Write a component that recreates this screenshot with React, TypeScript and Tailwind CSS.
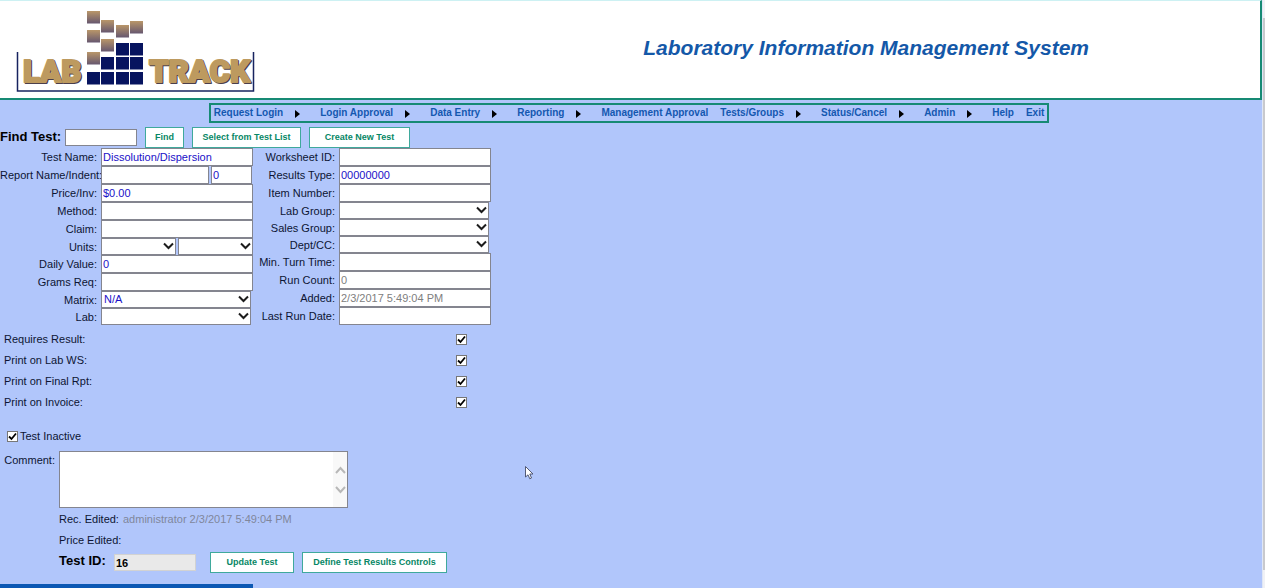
import React from 'react';

interface NavItem {
  label: string;
  hasMenu?: boolean;
}

const navItems: NavItem[] = [
  { label: 'Request Login', hasMenu: true },
  { label: 'Login Approval', hasMenu: true },
  { label: 'Data Entry', hasMenu: true },
  { label: 'Reporting', hasMenu: true },
  { label: 'Management Approval' },
  { label: 'Tests/Groups', hasMenu: true },
  { label: 'Status/Cancel', hasMenu: true },
  { label: 'Admin', hasMenu: true },
  { label: 'Help' },
  { label: 'Exit' },
];

// Falling tan squares: x, y
const tanSquares = [
  [87, 10], [87, 29], [87, 51], [101, 19], [101, 38], [116, 24], [130, 20],
];

const navySquares = [
  [116, 42], [130, 42],
  [101, 56], [116, 56], [130, 56],
  [87, 71], [101, 71], [116, 71], [130, 71],
];

const Logo: React.FC = () => (
  <svg width="270" height="96" viewBox="0 0 270 96" role="img" aria-label="Lab Track">
    <defs>
      <linearGradient id="tan" x1="0" y1="0" x2="0" y2="1">
        <stop offset="0" stopColor="#b99669" />
        <stop offset="1" stopColor="#66576f" />
      </linearGradient>
    </defs>
    <path d="M17.5 51V90H253.5V51" fill="none" stroke="#17235f" strokeWidth="1.5" />
    {tanSquares.map(([x, y]) => (
      <rect key={`${x}-${y}`} x={x} y={y} width="13" height="12.5" fill="url(#tan)" />
    ))}
    {navySquares.map(([x, y]) => (
      <rect key={`${x}-${y}`} x={x} y={y} width="13" height="12.5" fill="#07145f" />
    ))}
    <g className="font-[Roboto,sans-serif] text-[31px] font-black" strokeWidth="2" strokeLinejoin="round">
      <g fill="#4b3f4c" stroke="#4b3f4c">
        <text x="24" y="82">LAB</text>
        <text x="150" y="82">TRACK</text>
      </g>
      <g fill="#bd9a5f" stroke="#bd9a5f">
        <text x="23" y="81">LAB</text>
        <text x="149" y="81">TRACK</text>
      </g>
    </g>
  </svg>
);

const Nav: React.FC = () => (
  <nav className="mx-auto flex h-5 w-fit border-2 border-[#168a74] px-[3px] text-[10px] font-bold leading-[15px] text-[#1458b0]">
    {navItems.map((item) => (
      <div key={item.label} className="group flex">
        <a href="#" className="whitespace-nowrap pr-3 group-last:pr-0">{item.label}</a>
        {item.hasMenu && (
          <svg width="5" height="8" viewBox="0 0 5 8" className="mr-5 mt-[5px]" aria-hidden="true">
            <path d="M0 0L5 4L0 8Z" fill="#000" />
          </svg>
        )}
      </div>
    ))}
  </nav>
);

const Button: React.FC<{ children: React.ReactNode; className: string }> = ({ children, className }) => (
  <button
    type="button"
    className={`h-[21px] whitespace-nowrap border border-[#3fa99c] bg-white text-[9px] font-bold text-[#078765] ${className}`}
  >
    {children}
  </button>
);

interface FieldProps {
  id: string;
  label: string;
  labelWidth?: string;
  children: React.ReactNode;
}

const Field: React.FC<FieldProps> = ({ id, label, labelWidth = 'w-[101px]', children }) => (
  <div className="flex">
    <label htmlFor={id} className={`block shrink-0 whitespace-nowrap pr-1 text-right leading-[18px] ${labelWidth}`}>
      {label}
    </label>
    {children}
  </div>
);

interface TextBoxProps {
  id: string;
  value?: string;
  width?: string;
  color?: string;
  ariaLabel?: string;
}

const TextBox: React.FC<TextBoxProps> = ({ id, value = '', width = 'w-[152px]', color = 'text-[#1a10c8]', ariaLabel }) => (
  <input
    id={id}
    type="text"
    defaultValue={value}
    aria-label={ariaLabel}
    className={`h-[18px] border border-[#84858f] bg-white px-px ${width} ${color}`}
  />
);

const SelectBox: React.FC<TextBoxProps> = ({ id, value = '', width = 'w-[150px]', ariaLabel }) => (
  <div className={`relative h-[17px] ${width}`}>
    <select
      id={id}
      aria-label={ariaLabel}
      className="block h-[17px] w-full appearance-none border border-[#84858f] bg-white px-[2px] leading-[15px] text-[#1a10c8]"
    >
      <option>{value}</option>
    </select>
    <svg width="11" height="8" viewBox="0 0 11 8" className="pointer-events-none absolute right-[2px] top-1" aria-hidden="true">
      <path d="M1 1.500L5.500 6L10 1.500" fill="none" stroke="#1c1c1c" strokeWidth="2" />
    </svg>
  </div>
);

const CheckBox: React.FC<{ id: string }> = ({ id }) => (
  <span className="relative block size-[11px]">
    <input id={id} type="checkbox" defaultChecked className="peer block size-[11px] appearance-none border border-[#777] bg-white" />
    <svg width="11" height="11" viewBox="0 0 11 11" className="pointer-events-none absolute inset-0 hidden peer-checked:block" aria-hidden="true">
      <path d="M2 5.500L4.500 8L9 2.500" fill="none" stroke="#000" strokeWidth="1.8" />
    </svg>
  </span>
);

const printOptions = [
  { id: 'requires-result', label: 'Requires Result:' },
  { id: 'print-lab', label: 'Print on Lab WS:' },
  { id: 'print-final', label: 'Print on Final Rpt:' },
  { id: 'print-invoice', label: 'Print on Invoice:' },
];

const TestForm: React.FC = () => (
  <form className="flex grow flex-col">
    <div className="mt-1 flex">
      <label htmlFor="find-test" className="w-[65px] whitespace-nowrap text-[13px] font-bold leading-5 text-black">Find Test:</label>
      <input id="find-test" type="text" className="mt-[2px] h-[17px] w-[72px] border border-[#84858f] bg-white px-px" />
      <Button className="ml-2 w-[39px]">Find</Button>
      <Button className="ml-2 w-[109px]">Select from Test List</Button>
      <Button className="ml-2 w-[101px]">Create New Test</Button>
    </div>

    <div className="flex items-start">
      <div className="w-[253px] shrink-0">
        <Field id="test-name" label="Test Name:"><TextBox id="test-name" value="Dissolution/Dispersion" /></Field>
        <Field id="report-name" label="Report Name/Indent:">
          <div className="flex gap-[2px]">
            <TextBox id="report-name" width="w-[108px]" />
            <TextBox id="indent" value="0" width="w-[41px]" ariaLabel="Indent" />
          </div>
        </Field>
        <Field id="price" label="Price/Inv:"><TextBox id="price" value="$0.00" /></Field>
        <Field id="method" label="Method:"><TextBox id="method" /></Field>
        <Field id="claim" label="Claim:"><TextBox id="claim" /></Field>
        <div className="h-[17px]">
          <Field id="units" label="Units:">
            <div className="flex gap-[2px]">
              <SelectBox id="units" width="w-[75px]" />
              <SelectBox id="units-per" width="w-[75px]" ariaLabel="Units per" />
            </div>
          </Field>
        </div>
        <Field id="daily" label="Daily Value:"><TextBox id="daily" value="0" /></Field>
        <Field id="grams" label="Grams Req:"><TextBox id="grams" /></Field>
        <div className="h-[17px]">
          <Field id="matrix" label="Matrix:"><SelectBox id="matrix" value="N/A" /></Field>
        </div>
        <div className="h-[17px]">
          <Field id="lab" label="Lab:"><SelectBox id="lab" /></Field>
        </div>
      </div>

      <div>
        <Field id="worksheet" label="Worksheet ID:" labelWidth="w-[86px]"><TextBox id="worksheet" /></Field>
        <Field id="results" label="Results Type:" labelWidth="w-[86px]"><TextBox id="results" value="00000000" /></Field>
        <Field id="item" label="Item Number:" labelWidth="w-[86px]"><TextBox id="item" /></Field>
        <div className="h-[17px]">
          <Field id="lab-group" label="Lab Group:" labelWidth="w-[86px]"><SelectBox id="lab-group" /></Field>
        </div>
        <div className="h-[17px]">
          <Field id="sales-group" label="Sales Group:" labelWidth="w-[86px]"><SelectBox id="sales-group" /></Field>
        </div>
        <div className="h-[17px]">
          <Field id="dept" label="Dept/CC:" labelWidth="w-[86px]"><SelectBox id="dept" /></Field>
        </div>
        <Field id="turn" label="Min. Turn Time:" labelWidth="w-[86px]"><TextBox id="turn" /></Field>
        <Field id="run-count" label="Run Count:" labelWidth="w-[86px]"><TextBox id="run-count" value="0" color="text-[#808080]" /></Field>
        <Field id="added" label="Added:" labelWidth="w-[86px]"><TextBox id="added" value="2/3/2017 5:49:04 PM" color="text-[#808080]" /></Field>
        <Field id="last-run" label="Last Run Date:" labelWidth="w-[86px]"><TextBox id="last-run" /></Field>
      </div>
    </div>

    <div className="mt-1 w-[467px] pl-1">
      {printOptions.map((option) => (
        <div key={option.id} className="flex h-[21px] items-center justify-between">
          <label htmlFor={option.id}>{option.label}</label>
          <CheckBox id={option.id} />
        </div>
      ))}
    </div>

    <div className="mt-3 flex h-[22px] items-center gap-[2px] pl-[7px]">
      <CheckBox id="inactive" />
      <label htmlFor="inactive">Test Inactive</label>
    </div>

    <div className="mt-1 flex">
      <label htmlFor="comment" className="w-[59px] pr-1 text-right leading-[18px]">Comment:</label>
      <div className="relative">
        <textarea id="comment" className="block h-[57px] w-[289px] resize-none border border-[#84858f] bg-white" />
        <div className="absolute inset-y-px right-px flex w-[14px] flex-col items-center justify-center gap-3 bg-[#f8f8f8]">
          <svg width="11" height="8" viewBox="0 0 11 8" aria-hidden="true">
            <path d="M1 7L5.500 2L10 7" fill="none" stroke="#b8b8b8" strokeWidth="2" />
          </svg>
          <svg width="11" height="8" viewBox="0 0 11 8" aria-hidden="true">
            <path d="M1 1L5.500 6L10 1" fill="none" stroke="#b8b8b8" strokeWidth="2" />
          </svg>
        </div>
      </div>
    </div>

    <div className="pl-[59px]">
      <p className="mt-px leading-[21px]">Rec. Edited: <span className="ml-px text-[#80869c]">administrator 2/3/2017 5:49:04 PM</span></p>
      <p className="leading-[21px]">Price Edited:</p>
      <div className="mt-px flex">
        <label htmlFor="test-id" className="w-[55px] whitespace-nowrap text-[13px] font-bold leading-[18px] text-black">Test ID:</label>
        <input id="test-id" type="text" readOnly defaultValue="16" className="mt-[2px] h-[17px] w-[82px] border border-[#d2d2d2] bg-[#e9e9e9] px-px font-bold text-black" />
        <Button className="ml-[14px] w-[84px]">Update Test</Button>
        <Button className="ml-2 w-[145px]">Define Test Results Controls</Button>
      </div>
    </div>

    <div className="mt-auto h-1 w-[253px] bg-[#0b58b4]" />
  </form>
);

const App: React.FC = () => (
  <div className="relative flex min-h-screen bg-[#b1c6fb] font-['Liberation_Sans',Arial,sans-serif] text-[11px] text-[#0d1533]">
    <div className="flex min-w-0 grow flex-col">
      <header className="flex h-[100px] shrink-0 items-start justify-between border-b-2 border-r-2 border-t border-b-[#168a74] border-r-[#168a74] border-t-[#cdf1f3] bg-white">
        <Logo />
        <h1 className="mr-[171px] mt-8 whitespace-nowrap text-[21px] font-bold italic leading-[30px] text-[#1458a8]">
          Laboratory Information Management System
        </h1>
      </header>
      <div className="mt-[3px] pr-1">
        <Nav />
      </div>
      <TestForm />
    </div>

    {/* Page scrollbar */}
    <div className="flex w-[3px] shrink-0 flex-col border-l border-[#dfe6f5] bg-[#f0f1f5] py-[18px]">
      <div className="grow bg-[#c8c9cd]" />
    </div>

    <svg width="9" height="14" viewBox="0 0 9 14" className="pointer-events-none absolute left-[525px] top-[466px]" aria-hidden="true">
      <path d="M0.500 0.500V11L3 8.800L4.800 12.800L6.500 12L4.800 8H8Z" fill="#fff" stroke="#444b66" strokeWidth="0.900" />
    </svg>
  </div>
);

export default App;
